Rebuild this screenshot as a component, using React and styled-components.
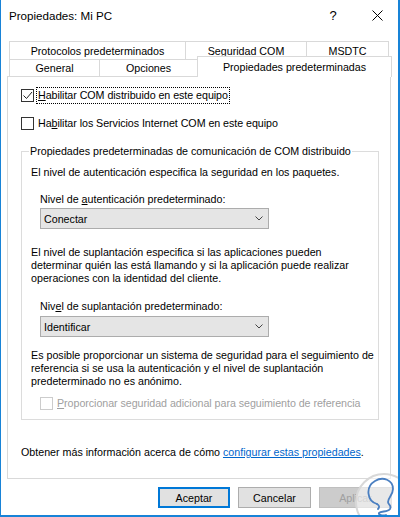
import styled, { createGlobalStyle } from "styled-components"

const GlobalStyle = createGlobalStyle`
  html, body {
    margin: 0;
    padding: 0;
    background: #ffffff;
  }
  body {
    font-family: "Liberation Sans", Arial, sans-serif;
    font-size: 10.7px;
    color: #000000;
  }
`

const Window = styled.div`
  position: relative;
  width: 400px;
  height: 517px;
  box-sizing: border-box;
  background: #ffffff;
  border-left: 1px solid #1883d7;
  border-right: 2px solid #1883d7;
  border-bottom: 2px solid #1883d7;
  overflow: hidden;
  display: flex;
  flex-direction: column;
`

const TitleBar = styled.div`
  height: 30px;
  display: flex;
  align-items: center;
  padding-left: 8px;
`

const Title = styled.div`
  flex: 1;
  font-size: 11.6px;
`

const HelpButton = styled.div`
  width: 20px;
  margin-right: 28px;
  text-align: center;
  font-size: 13px;
`

const CloseButton = styled.div`
  width: 12px;
  height: 12px;
  margin-right: 15px;
  display: flex;
  align-items: center;
  justify-content: center;
`

const TabArea = styled.div`
  margin-top: 11px;
  padding-left: 8px;
`

const TabRow = styled.div`
  display: flex;
  align-items: flex-start;
  height: ${(p) => p.$height}px;
`

const Tab = styled.div`
  box-sizing: border-box;
  width: ${(p) => p.$width}px;
  height: 100%;
  border: 1px solid #d9d9d9;
  border-bottom: none;
  background: #ffffff;
  display: flex;
  align-items: center;
  justify-content: center;
  white-space: nowrap;
  & + & {
    margin-left: -1px;
  }
`

const ActiveTab = styled(Tab)`
  position: relative;
  z-index: 1;
  height: 21px;
  margin-top: -3px;
  padding-bottom: 1px;
`

const Panel = styled.div`
  box-sizing: border-box;
  margin-left: 6px;
  width: 384px;
  height: 403px;
  border: 1px solid #d9d9d9;
  padding: 0 9px 0 13px;
`

const CheckRow = styled.div`
  display: flex;
  align-items: center;
  height: ${(p) => p.$height || 16}px;
  margin-top: ${(p) => p.$top}px;
  margin-left: ${(p) => p.$indent || 0}px;
  color: ${(p) => (p.$disabled ? "#a0a0a0" : "#000000")};
`

const Box = styled.div`
  box-sizing: border-box;
  width: 13px;
  height: 13px;
  border: 1px solid ${(p) => (p.$disabled ? "#cccccc" : "#333333")};
  background: #ffffff;
  display: flex;
  align-items: center;
  justify-content: center;
`

const CheckLabel = styled.span`
  margin-left: 2px;
  padding: 1px 1px 2px;
  border: 1px ${(p) => (p.$focused ? "dotted #000000" : "solid transparent")};
  white-space: nowrap;
  letter-spacing: -0.05px;
`

const GroupBox = styled.fieldset`
  margin: 14px 0 0 0;
  width: 358px;
  box-sizing: border-box;
  min-width: 0;
  border: 1px solid #dcdcdc;
  padding: 0 9px 9px 9px;
`

const Legend = styled.legend`
  padding: 0 1px;
  margin-left: -2px;
  line-height: 13px;
  white-space: nowrap;
`

const Text = styled.div`
  line-height: 13px;
  white-space: nowrap;
  margin-top: ${(p) => p.$top}px;
  margin-left: ${(p) => p.$indent || 0}px;
`

const Select = styled.div`
  box-sizing: border-box;
  margin-top: ${(p) => p.$top}px;
  margin-left: 9px;
  width: 229px;
  height: 21px;
  background: #e5e5e5;
  border: 1px solid #acacac;
  display: flex;
  align-items: center;
  justify-content: space-between;
  padding: 0 5px 0 3px;
`

const Footer = styled.div`
  margin-top: 26px;
  line-height: 13px;
  white-space: nowrap;
`

const Link = styled.a`
  color: #0066cc;
  text-decoration: underline;
`

const ButtonRow = styled.div`
  margin-top: 8px;
  display: flex;
  justify-content: flex-end;
  gap: 8px;
  padding-right: 6px;
`

const Button = styled.div`
  box-sizing: border-box;
  width: ${(p) => p.$width}px;
  height: 21px;
  display: flex;
  align-items: center;
  justify-content: center;
  background: ${(p) => (p.$disabled ? "#cccccc" : "#e1e1e1")};
  color: ${(p) => (p.$disabled ? "#a0a0a0" : "#000000")};
  border: ${(p) =>
    p.$default ? "2px solid #0078d7" : p.$disabled ? "1px solid #bfbfbf" : "1px solid #adadad"};
`

const Watermark = styled.svg`
  position: absolute;
  left: 352px;
  top: 471px;
  pointer-events: none;
`

const Chevron = () => (
  <svg width="8" height="5" viewBox="0 0 8 5">
    <polyline points="0.5,0.5 4,4 7.5,0.5" fill="none" stroke="#444" strokeWidth="1" />
  </svg>
)

const App = () => {
  return (
    <>
      <GlobalStyle />
      <Window>
        <TitleBar>
          <Title>Propiedades: Mi PC</Title>
          <HelpButton>?</HelpButton>
          <CloseButton>
            <svg width="11" height="11" viewBox="0 0 11 11">
              <path d="M0.5 0.5 L10.5 10.5 M10.5 0.5 L0.5 10.5" stroke="#000" strokeWidth="1" />
            </svg>
          </CloseButton>
        </TitleBar>

        <TabArea>
          <TabRow $height={18}>
            <Tab $width={177}>Protocolos predeterminados</Tab>
            <Tab $width={122}>Seguridad COM</Tab>
            <Tab $width={83}>MSDTC</Tab>
          </TabRow>
          <TabRow $height={17}>
            <Tab $width={91}>General</Tab>
            <Tab $width={99}>Opciones</Tab>
            <ActiveTab $width={195}>Propiedades predeterminadas</ActiveTab>
          </TabRow>
        </TabArea>

        <Panel>
          <CheckRow $top={10}>
            <Box>
              <svg width="11" height="11" viewBox="0 0 11 11">
                <polyline points="1.5,5.5 4.5,8.5 10,2" fill="none" stroke="#222" strokeWidth="1" />
              </svg>
            </Box>
            <CheckLabel $focused>
              <u>H</u>abilitar COM distribuido en este equipo
            </CheckLabel>
          </CheckRow>
          <CheckRow $top={12}>
            <Box />
            <CheckLabel>
              Ha<u>b</u>ilitar los Servicios Internet COM en este equipo
            </CheckLabel>
          </CheckRow>

          <GroupBox>
            <Legend>Propiedades predeterminadas de comunicación de COM distribuido</Legend>
            <Text $top={8}>El nivel de autenticación especifica la seguridad en los paquetes.</Text>
            <Text $top={14} $indent={9}>
              Nivel de <u>a</u>utenticación predeterminado:
            </Text>
            <Select $top={2}>
              <span>Conectar</span>
              <Chevron />
            </Select>
            <Text $top={17}>
              El nivel de suplantación especifica si las aplicaciones pueden
              <br />
              determinar quién las está llamando y si la aplicación puede realizar
              <br />
              operaciones con la identidad del cliente.
            </Text>
            <Text $top={15} $indent={9}>
              Niv<u>e</u>l de suplantación predeterminado:
            </Text>
            <Select $top={3}>
              <span>Identificar</span>
              <Chevron />
            </Select>
            <Text $top={12}>
              Es posible proporcionar un sistema de seguridad para el seguimiento de
              <br />
              referencia si se usa la autenticación y el nivel de suplantación
              <br />
              predeterminado no es anónimo.
            </Text>
            <CheckRow $top={9} $height={13} $indent={9} $disabled>
              <Box $disabled />
              <CheckLabel>
                <u>P</u>roporcionar seguridad adicional para seguimiento de referencia
              </CheckLabel>
            </CheckRow>
          </GroupBox>

          <Footer>
            Obtener más información acerca de cómo <Link>configurar estas propiedades</Link>.
          </Footer>
        </Panel>

        <ButtonRow>
          <Button $width={72} $default>Aceptar</Button>
          <Button $width={73}>Cancelar</Button>
          <Button $width={73} $disabled>Aplicar</Button>
        </ButtonRow>

        <Watermark width="60" height="60" viewBox="0 0 60 60">
          <circle cx="31" cy="31" r="28" fill="rgba(255,255,255,0.55)" stroke="#d8d8d8" strokeWidth="2" />
          <path
            d="M24 33 C14 30 12 16 22 10 C30 5 40 9 40 18 C40 24 35 27 35 31 C35 34 39 34 37 38 C35 41 28 40 26 42 C25 44 30 45 33 44"
            fill="none"
            stroke="#4a7fc1"
            strokeWidth="1.8"
            strokeLinecap="round"
          />
          <path d="M24 33 C26 34 27 36 25 38" fill="none" stroke="#4a7fc1" strokeWidth="1.8" strokeLinecap="round" />
        </Watermark>
      </Window>
    </>
  )
}

export default App
